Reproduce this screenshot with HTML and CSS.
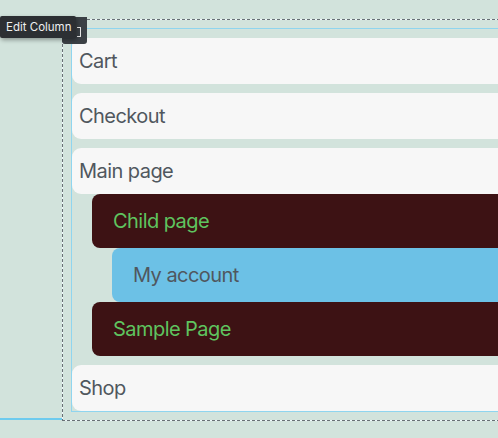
FILE: index.html
```html
<!DOCTYPE html>
<html>
<head>
<meta charset="utf-8">
<link rel="stylesheet" href="styles.css">
</head>
<body>
<div class="stage">
  <div class="edge-line"></div>
  <div class="column">
    <div class="toolbar"><span class="bracket"></span></div>
    <div class="tooltip">Edit Column</div>
    <div class="inner">
      <ul class="menu">
        <li class="item"><span class="label">Cart</span></li>
        <li class="item"><span class="label">Checkout</span></li>
        <li class="item parent">
          <span class="label">Main page</span>
          <ul class="sub">
            <li class="child"><span class="label">Child page</span>
              <ul class="sub">
                <li class="grand"><span class="label">My account</span></li>
              </ul>
            </li>
            <li class="child"><span class="label">Sample Page</span></li>
          </ul>
        </li>
        <li class="item"><span class="label">Shop</span></li>
      </ul>
    </div>
  </div>
</div>
</body>
</html>
```

FILE: styles.css
```css
html, body {
  margin: 0;
  padding: 0;
}
body {
  background: #d2e3dc;
  width: 498px;
  height: 438px;
  overflow: hidden;
  font-family: Inter, "Noto Sans", sans-serif;
}
.stage {
  position: relative;
  padding-top: 19px;
}
.edge-line {
  position: absolute;
  left: 0;
  top: 418px;
  width: 63px;
  height: 2px;
  background: #6ecbee;
}
.column {
  position: relative;
  margin-left: 62px;
  padding: 9px 0 9px 9px;
  background:
    repeating-linear-gradient(to right, #687075 0 3px, #eef8fb 3px 5px) left top / 100% 1px no-repeat,
    repeating-linear-gradient(to right, #687075 0 3px, #eef8fb 3px 5px) left bottom / 100% 1px no-repeat,
    repeating-linear-gradient(to bottom, #687075 0 3px, #eef8fb 3px 5px) left top / 1px 100% no-repeat;
}
.toolbar {
  position: absolute;
  left: 0;
  top: -2px;
  width: 25px;
  height: 27px;
  background: #3b4045;
  border-radius: 0 0 3px 3px;
  z-index: 2;
}
.bracket {
  position: absolute;
  left: 15px;
  top: 10px;
  width: 3px;
  height: 8px;
  border: 1.5px solid #e8e8e8;
  border-left: none;
  border-radius: 0 1px 1px 0;
}
.tooltip {
  position: absolute;
  left: -62px;
  top: -3px;
  width: 76px;
  box-sizing: border-box;
  height: 22px;
  line-height: 22px;
  padding: 0 0 0 6px;
  background: #2c2f33;
  color: #f0f0f0;
  font-size: 11.5px;
  border-radius: 2px;
  box-shadow: 1px 2px 4px rgba(0,0,0,0.35);
  z-index: 3;
  white-space: nowrap;
  overflow: hidden;
}
.inner {
  border: 1px solid #8fd5ef;
  border-right: none;
  padding-top: 9px;
}
.menu, .sub {
  list-style: none;
  margin: 0;
  padding: 0;
}
.menu {
  display: flex;
  flex-direction: column;
  gap: 9px;
}
.label {
  display: flex;
  align-items: center;
  font-size: 20px;
  letter-spacing: -0.55px;
}
.item > .label {
  height: 46px;
  padding-left: 7px;
  background: #f7f7f7;
  border-radius: 9px 0 0 9px;
  color: #50575e;
}
.parent > .sub {
  margin-left: 20px;
}
.child > .label {
  height: 54px;
  padding-left: 21px;
  background: #3d1214;
  border-radius: 8px 0 0 8px;
  color: #5fc45f;
}
.child > .sub {
  margin-left: 20px;
}
.grand > .label {
  height: 54px;
  padding-left: 21px;
  background: #6cc1e6;
  border-radius: 8px 0 0 8px;
  color: #50575e;
}
```
